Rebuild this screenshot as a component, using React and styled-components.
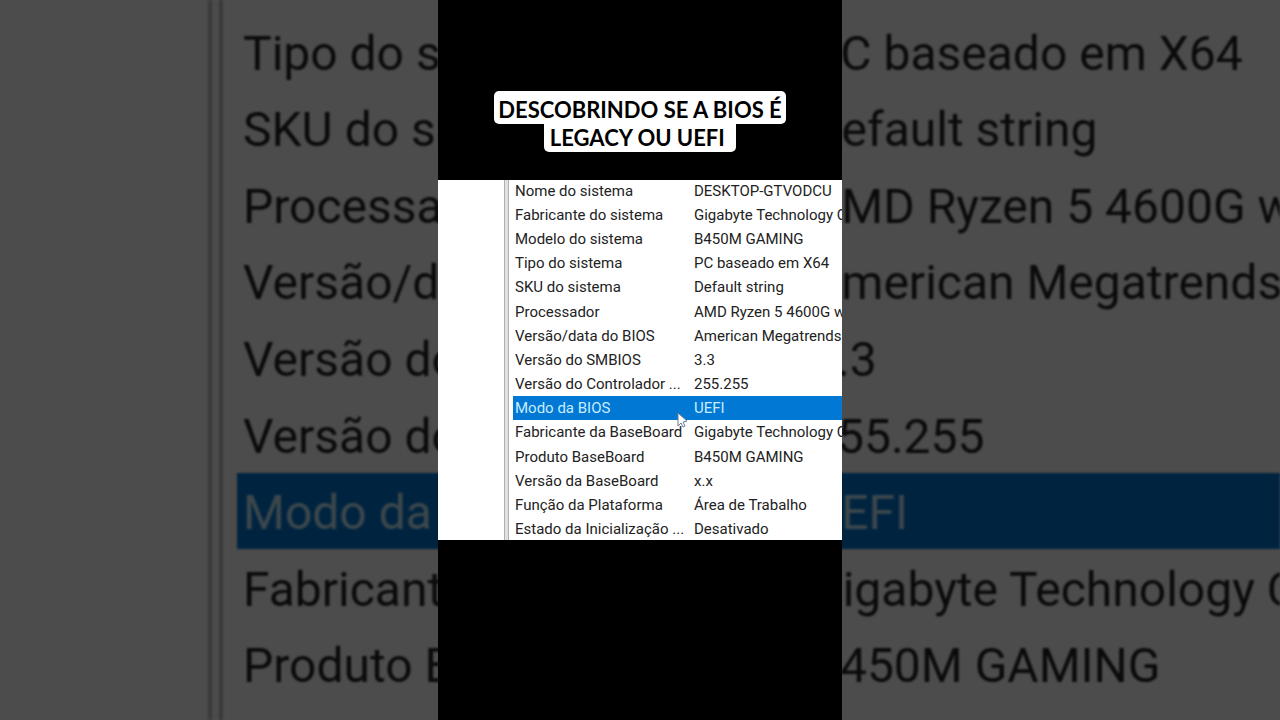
import styled, { createGlobalStyle } from "styled-components";

const GlobalStyle = createGlobalStyle`
  * {
    box-sizing: border-box;
  }
  body {
    margin: 0;
    background: #4b4b4b;
    font-family: Roboto, "Open Sans", sans-serif;
  }
`;

const Page = styled.main`
  position: relative;
  display: flex;
  justify-content: center;
  min-height: 100vh;
  overflow: hidden;
`;

// enlarged, dimmed copy of the frame behind the video
const Backdrop = styled.div`
  position: absolute;
  inset: 0;
  display: flex;
  filter: brightness(0.3) blur(1px);
`;

const Video = styled.section`
  position: relative;
  display: grid;
  grid-template-rows: minmax(0, 1fr) minmax(0, 2fr) minmax(0, 1fr);
  height: 100vh;
  aspect-ratio: 101 / 180;
  background: #000;
`;

const Caption = styled.h1`
  display: flex;
  flex-direction: column;
  align-items: center;
  align-self: end;
  margin: 0 0 28px;
  color: #000;
  font-family: Lato, "Open Sans", sans-serif;
  font-size: 22px;
  font-weight: 700;
  line-height: 28px;
  white-space: pre;
`;

const CaptionLine = styled.span`
  padding: ${(props) => (props.$first ? "5px 4px 0" : "0 6px")};
  border-radius: ${(props) => (props.$first ? "5px" : "0 0 5px 5px")};
  background: #fff;
`;

const Window = styled.div`
  display: flex;
  flex: 1;
  align-items: center;
  min-width: 0;
  overflow: hidden;
  background: #fff;
`;

const Tree = styled.div`
  flex: none;
  align-self: stretch;
  width: ${(props) => (props.$large ? 208 : 66)}px;
`;

const Splitter = styled.div`
  flex: none;
  align-self: stretch;
  width: ${(props) => (props.$large ? 15 : 5)}px;
  margin-right: ${(props) => (props.$large ? 14 : 4)}px;
  border: solid ${(props) => (props.$large ? "#c0c0c0" : "#b0b0b0")};
  border-width: 0 ${(props) => (props.$large ? 4 : 1)}px;
  background: ${(props) => (props.$large ? "#fafafa" : "#e0e0e0")};
`;

const Table = styled.table`
  flex: 1;
  min-width: 0;
  width: 100%;
  height: ${(props) => (props.$large ? 1149 : 363)}px;
  margin-bottom: ${(props) => (props.$large ? 4 : 1)}px;
  table-layout: fixed;
  border-collapse: collapse;
  color: #222;
  font-size: ${(props) => (props.$large ? 48 : 15)}px;
  line-height: 1;
  white-space: nowrap;
`;

const Row = styled.tr`
  background: ${(props) => (props.$selected ? "#0078d4" : "transparent")};
  color: ${(props) => (props.$selected ? "#c8ecff" : "inherit")};
`;

const Name = styled.th`
  position: relative;
  width: ${(props) => (props.$large ? 567 : 179)}px;
  padding: ${(props) => (props.$large ? "4px 0 0 6px" : "2px 0 0 2px")};
  font-weight: 400;
  text-align: left;
`;

const Value = styled.td`
  padding: ${(props) => (props.$large ? "4px 0 0 6px" : "2px 0 0 2px")};
  overflow: hidden;
`;

const Pointer = styled.svg`
  position: absolute;
  left: 164px;
  top: 16px;
  z-index: 1;
`;

const items = [
  ["Nome do sistema", "DESKTOP-GTVODCU"],
  ["Fabricante do sistema", "Gigabyte Technology Co., Ltd."],
  ["Modelo do sistema", "B450M GAMING"],
  ["Tipo do sistema", "PC baseado em X64"],
  ["SKU do sistema", "Default string"],
  ["Processador", "AMD Ryzen 5 4600G with"],
  ["Versão/data do BIOS", "American Megatrends"],
  ["Versão do SMBIOS", "3.3"],
  ["Versão do Controlador ...", "255.255"],
  ["Modo da BIOS", "UEFI"],
  ["Fabricante da BaseBoard", "Gigabyte Technology Co., Ltd."],
  ["Produto BaseBoard", "B450M GAMING"],
  ["Versão da BaseBoard", "x.x"],
  ["Função da Plataforma", "Área de Trabalho"],
  ["Estado da Inicialização ...", "Desativado"],
];

function SystemInfo({ large }) {
  return (
    <Window>
      <Tree $large={large} />
      <Splitter $large={large} />
      <Table $large={large}>
        <tbody>
          {items.map(([name, value]) => {
            const selected = name === "Modo da BIOS";
            return (
              <Row key={name} $selected={selected}>
                <Name scope="row" $large={large}>
                  {name}
                  {selected && !large && (
                    <Pointer width="14" height="18" viewBox="0 0 14 18">
                      <path
                        d="M1 1v13l3-3 2 4 2-1-2-4 4-1z"
                        fill="#fff"
                        stroke="#6a7b92"
                        strokeWidth="1"
                      />
                    </Pointer>
                  )}
                </Name>
                <Value $large={large}>{value}</Value>
              </Row>
            );
          })}
        </tbody>
      </Table>
    </Window>
  );
}

function App() {
  return (
    <Page>
      <GlobalStyle />
      <Backdrop aria-hidden="true">
        <SystemInfo large />
      </Backdrop>
      <Video>
        <Caption>
          <CaptionLine $first>DESCOBRINDO SE A BIOS É</CaptionLine>
          <CaptionLine>{"LEGACY OU UEFI "}</CaptionLine>
        </Caption>
        <SystemInfo />
      </Video>
    </Page>
  );
}

export default App;
